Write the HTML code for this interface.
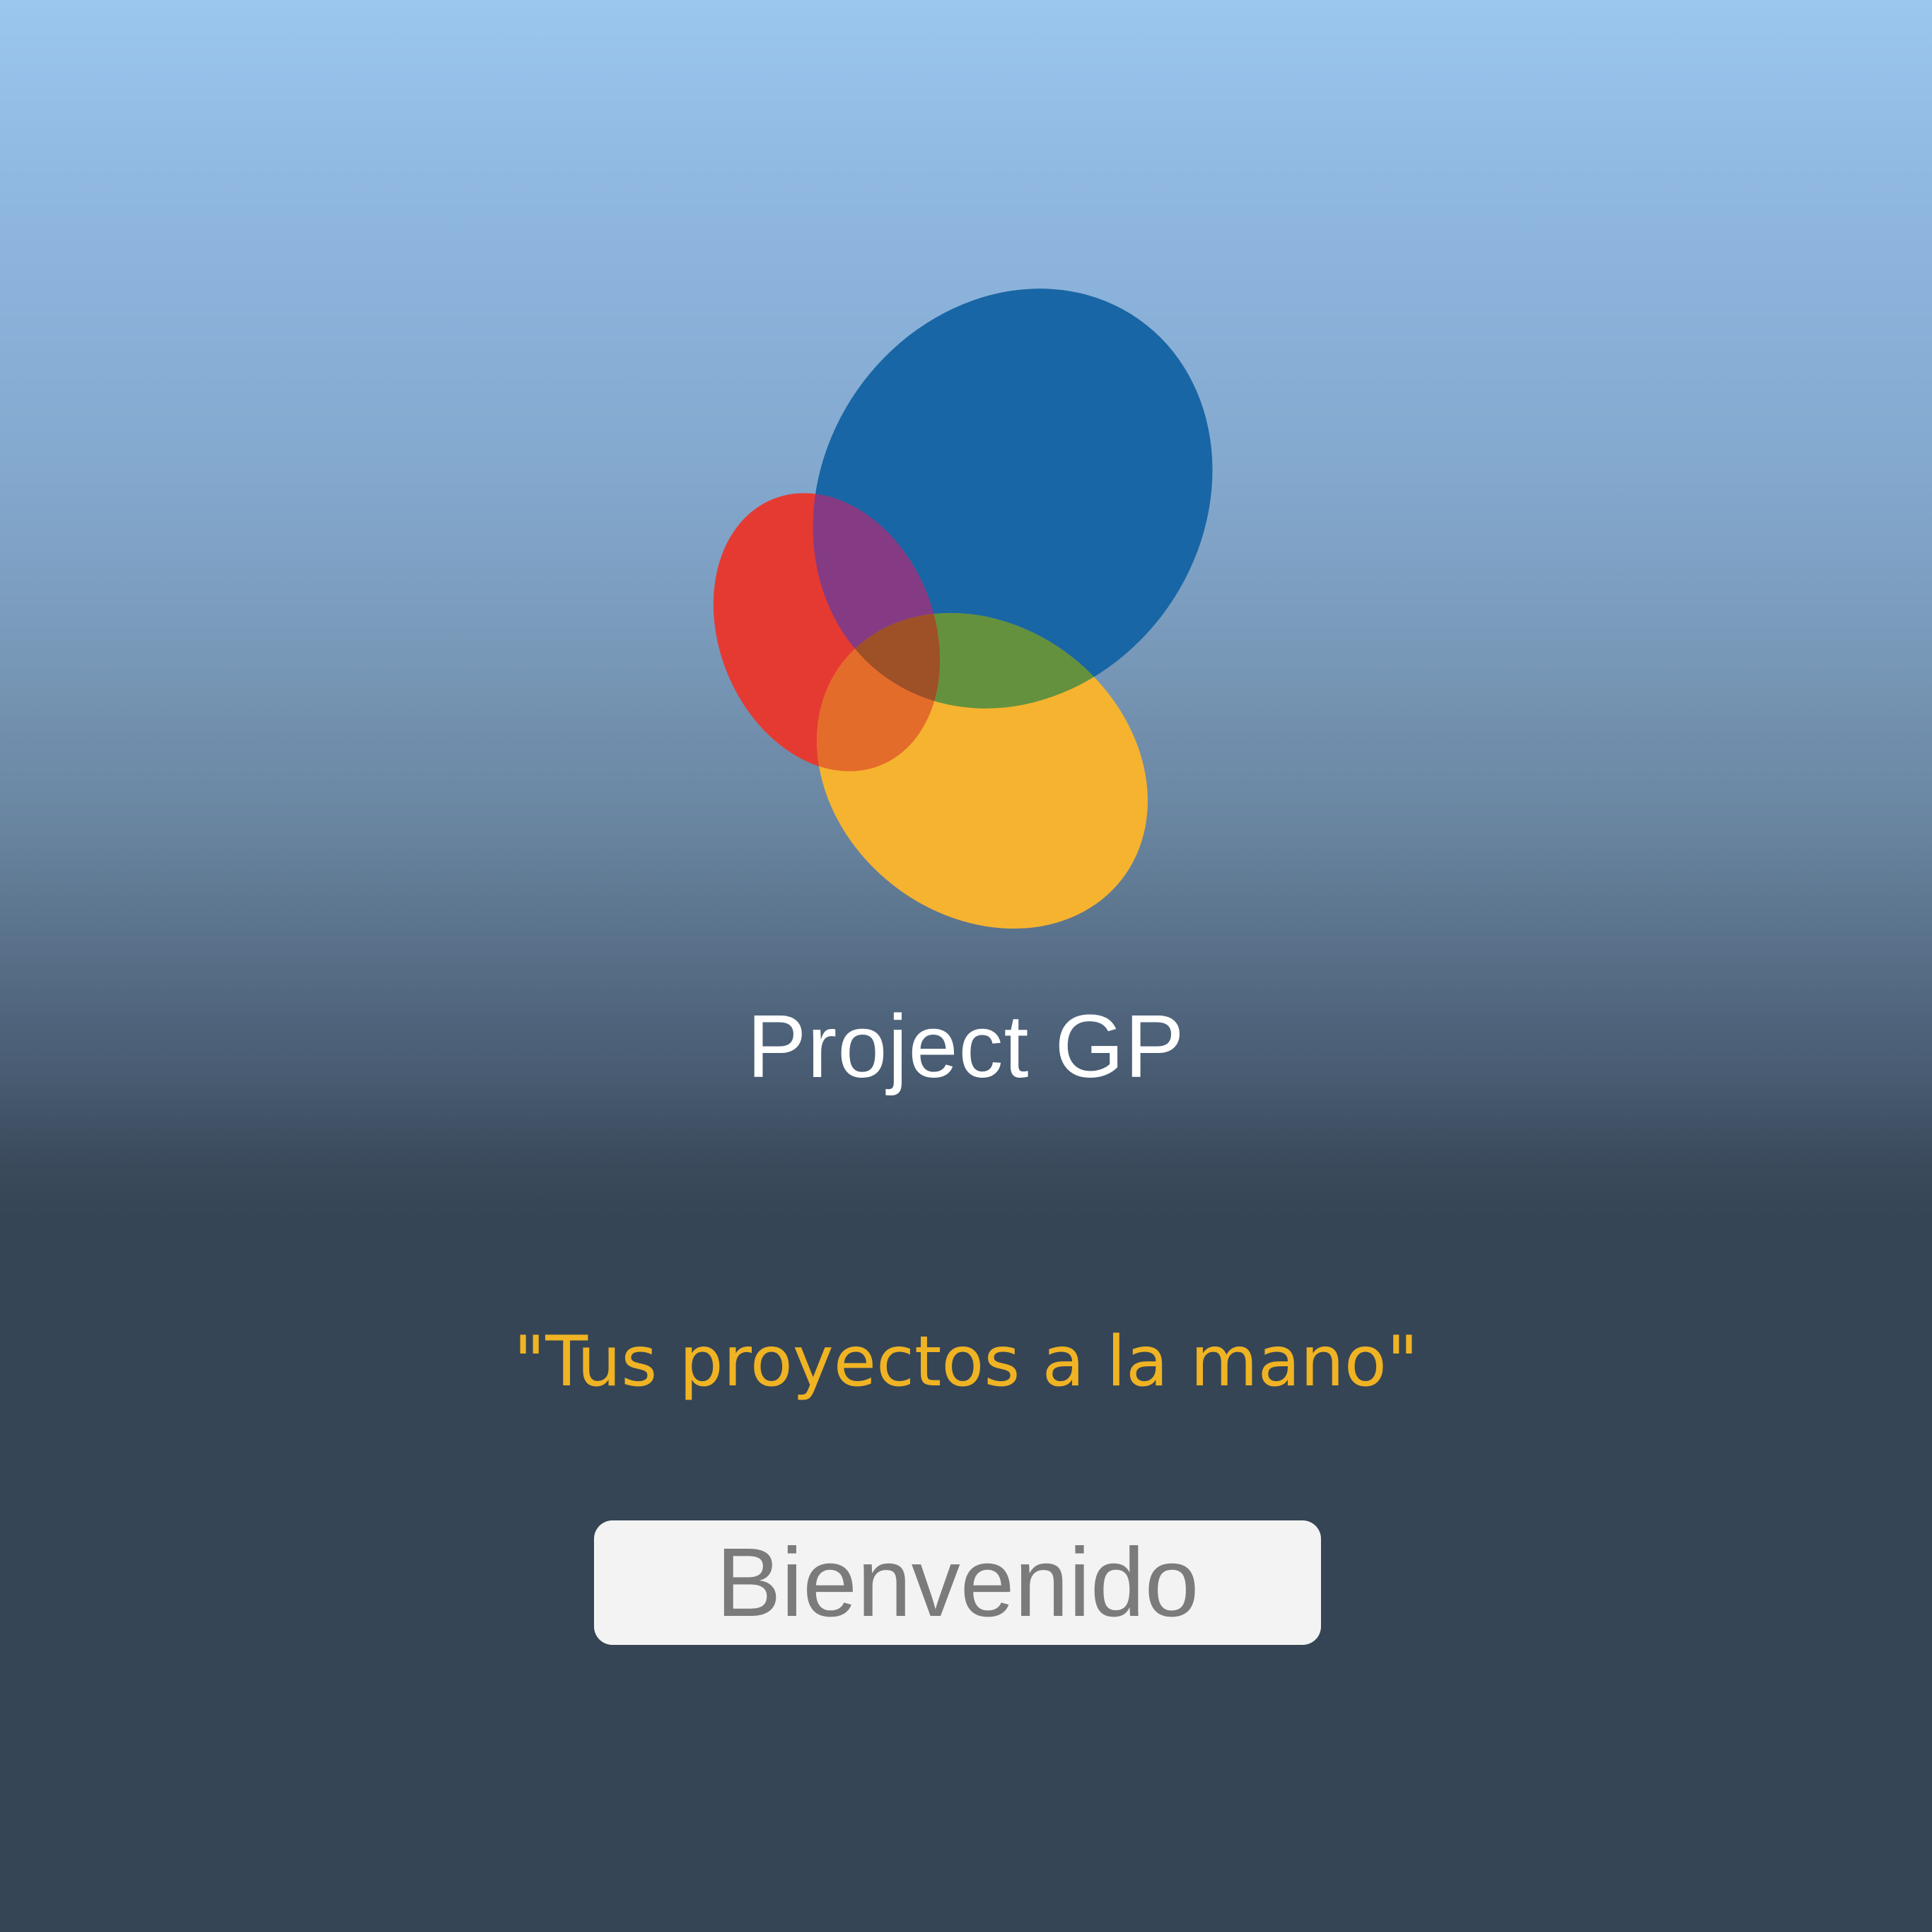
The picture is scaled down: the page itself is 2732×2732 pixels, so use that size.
<!DOCTYPE html>
<html><head><meta charset="utf-8"><style>
html,body{margin:0;padding:0}
body{width:2732px;height:2732px;overflow:hidden;position:relative;
background:linear-gradient(to bottom,#9bc6ee 0%,#8db5de 12%,#84a9cf 24%,#7898b8 34%,#68849f 43%,#566d86 50%,#475a70 56%,#3b4b5d 60%,#354555 63%,#354555 100%);
font-family:"Liberation Sans","DejaVu Sans",sans-serif}
svg{position:absolute;left:0;top:0}
.t{position:absolute;left:0;width:2732px;text-align:center;white-space:nowrap}
#btn{position:absolute;left:840px;top:2150px;width:1028px;height:176px;border-radius:26px;background:#f3f3f3;
color:#7b7b7b;font-size:138px;line-height:176px;text-align:center;font-family:"Liberation Sans","DejaVu Sans",sans-serif}
</style></head><body>
<svg width="2732" height="2732">
<defs>
<clipPath id="cb"><ellipse cx="1432" cy="705" rx="268" ry="310" transform="rotate(35 1432 705)"/></clipPath>
<clipPath id="cr"><ellipse cx="1169" cy="894" rx="152" ry="203" transform="rotate(-22 1169 894)"/></clipPath>
<clipPath id="cy"><ellipse cx="1389" cy="1090" rx="250" ry="205" transform="rotate(38 1389 1090)"/></clipPath>
</defs>
<ellipse cx="1432" cy="705" rx="268" ry="310" transform="rotate(35 1432 705)" fill="#1866a5"/>
<ellipse cx="1169" cy="894" rx="152" ry="203" transform="rotate(-22 1169 894)" fill="#e53a32"/>
<ellipse cx="1389" cy="1090" rx="250" ry="205" transform="rotate(38 1389 1090)" fill="#f5b330"/>
<g clip-path="url(#cb)"><rect width="2732" height="2732" fill="#853b84" clip-path="url(#cr)"/></g>
<g clip-path="url(#cb)"><rect width="2732" height="2732" fill="#64913e" clip-path="url(#cy)"/></g>
<g clip-path="url(#cr)"><rect width="2732" height="2732" fill="#e46c2a" clip-path="url(#cy)"/></g>
<g clip-path="url(#cb)"><g clip-path="url(#cr)"><rect width="2732" height="2732" fill="#9e5026" clip-path="url(#cy)"/></g></g>
</svg>
<div class="t" style="top:1400px;font-size:126px;color:#fff;line-height:160px;letter-spacing:1px">Project GP</div>
<div class="t" style="top:1866px;font-size:98px;color:#f0b323;line-height:120px;font-family:'DejaVu Sans','Liberation Sans',sans-serif">"Tus proyectos a la mano"</div>
<div id="btn">Bienvenido</div>
</body></html>
